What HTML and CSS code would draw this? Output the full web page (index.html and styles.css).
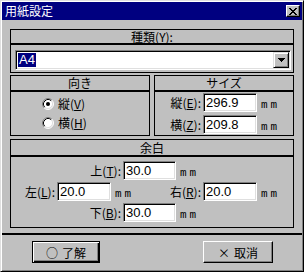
FILE: index.html
```html
<!DOCTYPE html>
<html lang="ja">
<head>
<meta charset="utf-8">
<title>用紙設定</title>
<link rel="stylesheet" href="styles.css">
</head>
<body>
<div class="window">
  <div class="titlebar">
    <span class="title">用紙設定</span>
    <span class="close" aria-label="閉じる">
      <svg width="8" height="7" viewBox="0 0 8 7"><path d="M0 0h2v1H0zM6 0h2v1H6zM1 1h2v1H1zM5 1h2v1H5zM2 2h4v1H2zM3 3h2v1H3zM2 4h4v1H2zM1 5h2v1H1zM5 5h2v1H5zM0 6h2v1H0zM6 6h2v1H6z" fill="#000"/></svg>
    </span>
  </div>
  <div class="content">
    <section class="group g-type">
      <div class="ghead">種類(<u>Y</u>):</div>
      <div class="gbody">
        <div class="combo">
          <div class="combo-field"><span class="sel">A4</span></div>
          <div class="combo-btn"><svg width="7" height="4" viewBox="0 0 7 4"><path d="M0 0h7v1H0zM1 1h5v1H1zM2 2h3v1H2zM3 3h1v1H3z" fill="#000"/></svg></div>
        </div>
      </div>
    </section>

    <div class="row2">
      <section class="group g-orient">
        <div class="ghead">向き</div>
        <div class="gbody radios">
          <div class="radio">
            <svg class="rbox" width="12" height="12" viewBox="0 0 12 12">
              <circle cx="6" cy="6" r="5" fill="#fff"/>
              <path d="M2.11 9.89A5.5 5.5 0 0 1 9.89 2.11" fill="none" stroke="#808080"/>
              <path d="M9.89 2.11A5.5 5.5 0 0 1 2.11 9.89" fill="none" stroke="#fff"/>
              <path d="M2.82 9.18A4.5 4.5 0 0 1 9.18 2.82" fill="none" stroke="#000"/>
              <path d="M9.18 2.82A4.5 4.5 0 0 1 2.82 9.18" fill="none" stroke="#dfdfdf"/>
              <circle cx="6" cy="6" r="2" fill="#000"/>
            </svg>
            <span>縦(<u>V</u>)</span>
          </div>
          <div class="radio">
            <svg class="rbox" width="12" height="12" viewBox="0 0 12 12">
              <circle cx="6" cy="6" r="5" fill="#fff"/>
              <path d="M2.11 9.89A5.5 5.5 0 0 1 9.89 2.11" fill="none" stroke="#808080"/>
              <path d="M9.89 2.11A5.5 5.5 0 0 1 2.11 9.89" fill="none" stroke="#fff"/>
              <path d="M2.82 9.18A4.5 4.5 0 0 1 9.18 2.82" fill="none" stroke="#000"/>
              <path d="M9.18 2.82A4.5 4.5 0 0 1 2.82 9.18" fill="none" stroke="#dfdfdf"/>
            </svg>
            <span>横(<u>H</u>)</span>
          </div>
        </div>
      </section>

      <section class="group g-size">
        <div class="ghead">サイズ</div>
        <div class="gbody sizes">
          <div class="field">
            <span class="lbl">縦(<u>E</u>):</span>
            <span class="input">296.9</span>
            <span class="unit">mm</span>
          </div>
          <div class="field">
            <span class="lbl">横(<u>Z</u>):</span>
            <span class="input">209.8</span>
            <span class="unit">mm</span>
          </div>
        </div>
      </section>
    </div>

    <section class="group g-margin">
      <div class="ghead">余白</div>
      <div class="gbody margins">
        <div class="mrow mrow-center">
          <div class="field f-center">
            <span class="lbl">上(<u>T</u>):</span>
            <span class="input">30.0</span>
            <span class="unit">mm</span>
          </div>
        </div>
        <div class="mrow">
          <div class="field f-left">
            <span class="lbl">左(<u>L</u>):</span>
            <span class="input">20.0</span>
            <span class="unit">mm</span>
          </div>
          <div class="field f-right">
            <span class="lbl">右(<u>R</u>):</span>
            <span class="input">20.0</span>
            <span class="unit">mm</span>
          </div>
        </div>
        <div class="mrow mrow-center">
          <div class="field f-center">
            <span class="lbl">下(<u>B</u>):</span>
            <span class="input">30.0</span>
            <span class="unit">mm</span>
          </div>
        </div>
      </div>
    </section>
  </div>

  <div class="sep"></div>

  <div class="buttons">
    <span class="btn btn-default"><span class="mark">○</span>了解</span>
    <span class="btn btn-cancel"><span class="mark">×</span>取消</span>
  </div>
</div>
</body>
</html>
```

FILE: styles.css
```css
* { box-sizing: border-box; }

html, body {
  margin: 0;
  padding: 0;
  background: #c0c0c0;
}

body {
  font-family: "Noto Sans CJK JP", "Noto Sans", sans-serif;
  font-size: 12px;
  color: #000;
}

u { text-decoration: underline; text-underline-offset: 1px; }

.window {
  width: 304px;
  height: 272px;
  background: #c0c0c0;
  border: 1px solid;
  border-color: #dfdfdf #000 #000 #dfdfdf;
  box-shadow: inset 1px 1px #fff, inset -1px -1px #808080;
  padding: 1px;
  display: flex;
  flex-direction: column;
}

.titlebar {
  height: 18px;
  background: #000080;
  display: flex;
  align-items: center;
  justify-content: space-between;
  padding: 0 2px 0 3px;
}

.title {
  color: #fff;
  font-size: 12px;
  line-height: 14px;
}

.close {
  width: 14px;
  height: 12px;
  background: #c0c0c0;
  border: 1px solid;
  border-color: #fff #000 #000 #fff;
  box-shadow: inset -1px -1px #808080;
  display: flex;
  align-items: center;
  justify-content: center;
}

.content {
  padding: 9px 8px 0 8px;
  display: flex;
  flex-direction: column;
}

.group {
  border: 1px solid #000;
  display: flex;
  flex-direction: column;
}

.ghead {
  text-align: center;
  border-bottom: 2px solid #000;
  line-height: 13px;
  height: 15px;
}

/* 種類 */
.g-type .gbody { padding: 5px 2px 2px 4px; }

.combo {
  height: 20px;
  display: flex;
  border: 1px solid;
  border-color: #808080 #fff #fff #808080;
  box-shadow: inset 1px 1px #000, inset -1px -1px #dfdfdf;
  background: #fff;
  padding: 1px;
}

.combo-field {
  flex: 1;
  display: flex;
  align-items: center;
  padding-left: 1px;
}

.sel {
  background: #000080;
  color: #fff;
  font-family: "Liberation Sans", Arial, sans-serif;
  font-size: 13px;
  line-height: 14px;
  padding: 0 1px;
}

.combo-btn {
  width: 16px;
  background: #c0c0c0;
  border: 1px solid;
  border-color: #dfdfdf #000 #000 #dfdfdf;
  box-shadow: inset 1px 1px #fff, inset -1px -1px #808080;
  display: flex;
  align-items: center;
  justify-content: center;
}

/* row of 向き / サイズ */
.row2 {
  margin-top: 2px;
  display: flex;
  gap: 4px;
}

.row2 .group { width: 140px; height: 61px; }
.row2 .ghead { height: 16px; line-height: 14px; }

.radios {
  padding: 2px 0 0 31px;
  display: flex;
  flex-direction: column;
}

.radio {
  height: 19px;
  display: flex;
  align-items: center;
  gap: 4px;
}

.rbox { display: block; }

.sizes {
  padding: 1px 0 0 0;
  display: flex;
  flex-direction: column;
  gap: 3px;
}

.field {
  display: flex;
  align-items: center;
  height: 19px;
}

.lbl {
  text-align: right;
  padding-right: 2px;
  white-space: nowrap;
}

.input {
  width: 54px;
  height: 19px;
  background: #fff;
  border: 1px solid;
  border-color: #808080 #fff #fff #808080;
  box-shadow: inset 1px 1px #000, inset -1px -1px #dfdfdf;
  font-family: "Liberation Sans", Arial, sans-serif;
  font-size: 13px;
  line-height: 17px;
  padding-left: 2px;
}

.unit {
  font-family: "Liberation Mono", monospace;
  font-size: 11px;
  letter-spacing: 3px;
  margin-left: 4px;
  padding-top: 4px;
}

.sizes .lbl { width: 48px; }

/* 余白 */
.g-margin { margin-top: 3px; height: 89px; }
.g-margin .ghead { height: 17px; line-height: 15px; }

.margins {
  padding: 4px 0 0 0;
  display: flex;
  flex-direction: column;
  gap: 2px;
}

.mrow {
  display: flex;
  height: 19px;
}

.mrow-center { padding-left: 52px; }
.f-center .lbl { width: 60px; }
.f-center .input { width: 53px; }

.f-left { width: 132px; }
.f-left .lbl { width: 46px; }

.f-right .lbl { width: 60px; }

/* separator & buttons */
.sep {
  margin-top: 5px;
  height: 2px;
  background: #000;
}

.buttons {
  margin-top: 6px;
  display: flex;
  padding-left: 30px;
}

.btn {
  height: 22px;
  display: flex;
  align-items: center;
  justify-content: center;
  font-size: 12px;
}

.mark { margin-right: 4px; }

.btn-default {
  width: 68px;
  border: 1px solid #000;
  box-shadow: inset 1px 1px #fff, inset -1px -1px #000, inset -2px -2px #808080;
}

.btn-cancel {
  width: 70px;
  margin-left: 103px;
  border: 1px solid;
  border-color: #fff #000 #000 #fff;
  box-shadow: inset -1px -1px #808080;
}
```
